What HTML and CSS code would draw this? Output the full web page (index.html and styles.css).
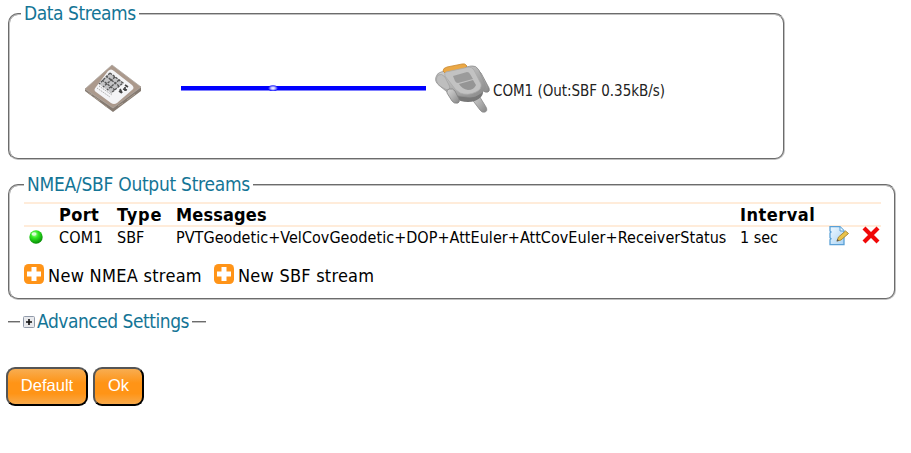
FILE: index.html
```html
<!DOCTYPE html>
<html lang="en">
<head>
<meta charset="utf-8">
<title>Data Streams</title>
<link rel="stylesheet" href="styles.css">
</head>
<body>
<svg width="0" height="0" class="defs">
  <defs>
    <linearGradient id="silver" x1="0" y1="0" x2="1" y2="1"><stop offset="0" stop-color="#d8d8d8"/><stop offset=".5" stop-color="#b2b2b2"/><stop offset="1" stop-color="#858585"/></linearGradient>
    <linearGradient id="blueDoc" x1="0" y1="0" x2="1" y2="1"><stop offset="0" stop-color="#f0f9ff"/><stop offset="1" stop-color="#a9d3f5"/></linearGradient>
    <radialGradient id="led" cx=".4" cy=".3" r=".7"><stop offset="0" stop-color="#b0ffa0"/><stop offset=".4" stop-color="#30e820"/><stop offset="1" stop-color="#078c07"/></radialGradient>
    <radialGradient id="pulse"><stop offset="0" stop-color="#fff"/><stop offset=".4" stop-color="#c0c0ff"/><stop offset="1" stop-color="#0000ff"/></radialGradient>
    <symbol id="plus" viewBox="0 0 20 20"><rect width="20" height="20" rx="4.500" fill="#ff9418"/><path d="M7.500 3h5v4.500H17v5h-4.500V17h-5v-4.500H3v-5h4.500z" fill="#fff"/></symbol>
  </defs>
</svg>
<fieldset class="data">
  <legend><span class="t-data">Data Streams</span></legend>
  <div class="diagram">
    <svg class="chip" width="58" height="50" viewBox="0 0 58 50">
      <path d="M1 25v3l28 21 28-21v-5L29 43z" fill="#857a71"/>
      <path d="M28 2l29 22-28 21L1 26z" fill="#ab998c" stroke="#b0a8a2" stroke-width=".8"/>
      <path d="M24 8q3-3 6 0l18 14q3 3 0 5L33 40q-3 2-6 0L12 29q-3-2 0-5z" fill="#f4f4f6"/>
      <path d="M26 10l13 10-12 10-12-9z" fill="#c4c4c6"/>
      <path d="M26 10l13 10-12 10M22 13l13 10M18 17l13 10M31 14l-12 10M35 17l-12 10M26 10L15 21" fill="none" stroke="#555" stroke-width="1.400" stroke-dasharray="2.500 1"/>
      <path d="M13 25l13 9M15 23l13 9" stroke="#aaa" stroke-dasharray="1.500 1"/>
      <path d="M35 28l3 2M36 26l2 4M41 22l3 2M39 26l4 1M41 24v4" stroke="#444" stroke-width="1.700"/>
      <path d="M4 30l4 2M10 34l6 4M20 42l3 2M34 43l5-3M43 37l8-6" stroke="#aa9d90"/>
    </svg>
    <svg class="link" width="245" height="6" viewBox="0 0 245 6"><rect y="1" width="245" height="4.500" fill="#0000ff"/><ellipse cx="92" cy="3.200" rx="5" ry="3" fill="url(#pulse)"/></svg>
    <svg class="plug" width="57" height="52" viewBox="0 0 57 52">
      <path d="M36 33l6-2 8 13q2 4-1 5-3 1-5-2l-9-12z" fill="url(#silver)" stroke="#888" stroke-width=".8"/>
      <path d="M39 8q4-2 6 2l8 15q1 3-1 4-4 1-5-2L38 14z" fill="url(#silver)" stroke="#808080" stroke-width=".8"/>
      <path d="M15 31l18 2 14-9q1 7-2 10-5 5-13 5-8 0-13-4z" fill="#777"/>
      <path d="M0 14q1-4 5-5L35 3q5-1 8 4l6 14q2 6-4 9-6 5-13 4L15 32 5 24Q-2 19 0 14z" fill="url(#silver)" stroke="#929292" stroke-width=".8"/>
      <path d="M7 8q0-3 4-4L26 1q3-1 5 2l-3 3-18 5z" fill="#eba845" stroke="#c98a35" stroke-width=".8"/>
      <path d="M10 9l23-5q3 0 5 3l7 14q1 5-5 8-8 4-16 1-5-3-8-8L9 13q-1-3 1-4z" fill="#c2c2c2" stroke="#aaa" stroke-width=".8"/>
      <path d="M17 13l14-4q2 0 3 2l3 5-15 4q-2 0-3-2z" fill="#9b9b9b"/>
      <path d="M23 21l14-4 3 5q-2 5-8 5-6-1-9-6z" fill="#959595"/>
      <path d="M2 12q4-2 7 2l4 8q2 4-1 5-2 0-8-4-6-5-2-11z" fill="#bebebe" stroke="#999" stroke-width=".6"/>
      <path d="M13 26q4-1 6 2l4 8q1 3-1 4-4 1-6-2l-5-8q-1-3 2-4z" fill="url(#silver)" stroke="#818181" stroke-width=".8"/>
    </svg>
    <span class="t-com">COM1 (Out:SBF 0.35kB/s)</span>
  </div>
</fieldset>
<fieldset class="output">
  <legend><span class="t-out">NMEA/SBF Output Streams</span></legend>
  <div class="row head"><span></span><span class="t-port">Port</span><span class="t-type">Type</span><span class="t-msg">Messages</span><span class="t-int">Interval</span></div>
  <div class="row item">
    <svg width="16" height="16" class="led"><circle cx="8" cy="8" r="6.700" fill="url(#led)"/><ellipse cx="6" cy="5" rx="2.500" ry="1.700" fill="#d9ffd3"/></svg>
    <span class="t-com1">COM1</span><span class="t-sbf">SBF</span><span class="t-long">PVTGeodetic+VelCovGeodetic+DOP+AttEuler+AttCovEuler+ReceiverStatus</span><span class="t-sec">1 sec</span>
    <svg class="edit" width="20" height="20" viewBox="0 0 20 20"><path d="M1 .7h10l4 4v14H1v-5l1-1-1-1V7l1-1-1-1z" fill="url(#blueDoc)" stroke="#5aa0d6" stroke-width="1.300"/><path d="M11 1v4h4" fill="#eef9ff" stroke="#5aa0d6"/><path d="M8 15l1.500-4 7-6 3 2.500-7.500 6.500z" fill="#e9c34a" stroke="#a8893b"/><path d="M7.500 15.500l1-2.500 1.500 1.700z" fill="#555"/></svg>
    <svg class="del" width="18" height="18" viewBox="0 0 18 18"><path d="M2 2l14 14M16 2l-14 14" stroke="#f00808" stroke-width="4.200"/></svg>
  </div>
  <div class="actions"><svg width="20" height="20"><use href="#plus"/></svg><span class="t-new1">New NMEA stream</span><svg width="20" height="20"><use href="#plus"/></svg><span class="t-new2">New SBF stream</span></div>
</fieldset>
<fieldset class="advanced">
  <legend><svg width="12" height="12" viewBox="0 0 12 12"><rect x=".5" y=".5" width="11" height="11" rx="1" fill="#e9eaed" stroke="#929baa"/><path d="M6 3v6M3 6h6" stroke="#111" stroke-width="1.600"/></svg><span class="t-adv">Advanced Settings</span></legend>
</fieldset>
<div class="buttons"><button class="default">Default</button><button class="ok">Ok</button></div>
</body>
</html>
```
FILE: styles.css
```css
* { box-sizing: border-box; }
body { margin: 0; padding: 2px 0 0 8px; background: #fff; color: #000; font-family: "DejaVu Sans Condensed", "DejaVu Sans", sans-serif; font-stretch: condensed; height: 453px; overflow: hidden; }
.defs { position: absolute; }
span { white-space: nowrap; }
fieldset { margin: 0; border: 2px groove #c0c0c0; border-radius: 10px; padding: 0; min-width: 0; }
legend { margin-left: 11px; padding: 0 3px; height: 23px; line-height: 23px; font-size: 19px; color: #147596; display: flex; align-items: center; }
.data { width: 777px; height: 158px; }
.diagram { display: flex; align-items: flex-start; padding: 38px 0 0 74px; }
.link { margin: 22px 0 0 39px; }
.plug { margin: 0 0 0 10px; overflow: visible; }
.diagram span { font-size: 15px; line-height: 20px; margin: 18px 0 0 0; color: #222; }
.output { width: 888px; height: 127px; margin-top: 13px; }
.output legend { margin-left: 14px; }
.row { display: grid; grid-template-columns: 35px 58px 59px 564px 89px 34px 20px; width: 857px; margin-left: 14px; }
.head { margin-top: 6px; height: 25px; border-top: 2px solid #ffecda; border-bottom: 2px solid #ffecda; font-size: 18px; line-height: 21px; font-weight: bold; }
.item { font-size: 16px; line-height: 22px; height: 24px; }
.led { margin: 2px 0 0 4px; }
.edit { margin-top: -1px; }
.del { margin: -1px 0 0 -1px; }
.actions { display: flex; align-items: center; margin: 12px 0 0 14px; height: 22px; font-size: 18px; line-height: 22px; }
.actions span { margin: 3px 0 0 4px; width: 166px; }
.actions svg { flex: none; }
.advanced { width: 198px; height: 23px; margin-top: 10px; border-width: 2px 0 0; border-radius: 0; }
.advanced legend { margin-left: 12px; padding-left: 3px; }
.t-adv { margin-left: 2px; letter-spacing: -.47px; }
.t-data { letter-spacing: -.43px; }
.t-out { letter-spacing: -.27px; }
.t-com { letter-spacing: -.03px; }
.t-port { letter-spacing: .35px; }
.t-type { letter-spacing: .8px; }
.t-msg { letter-spacing: .15px; }
.t-int { letter-spacing: .5px; }
.t-com1 { letter-spacing: .2px; }
.t-long { letter-spacing: .045px; }
.t-new1 { letter-spacing: .28px; }
.t-new2 { letter-spacing: .23px; }
.buttons { display: flex; gap: 5px; margin: 34px 0 0 -2px; }
button { height: 39px; padding: 0 0 2px; border: 2px solid; border-color: #555 #000 #000 #555; border-radius: 9px; color: #fff; font: 16.500px "Liberation Sans", sans-serif; background: linear-gradient(#f8ad51, #ff9416 40%, #ff9416 70%, #f8a94a); }
.default { width: 82px; }
.ok { width: 51px; }
```
